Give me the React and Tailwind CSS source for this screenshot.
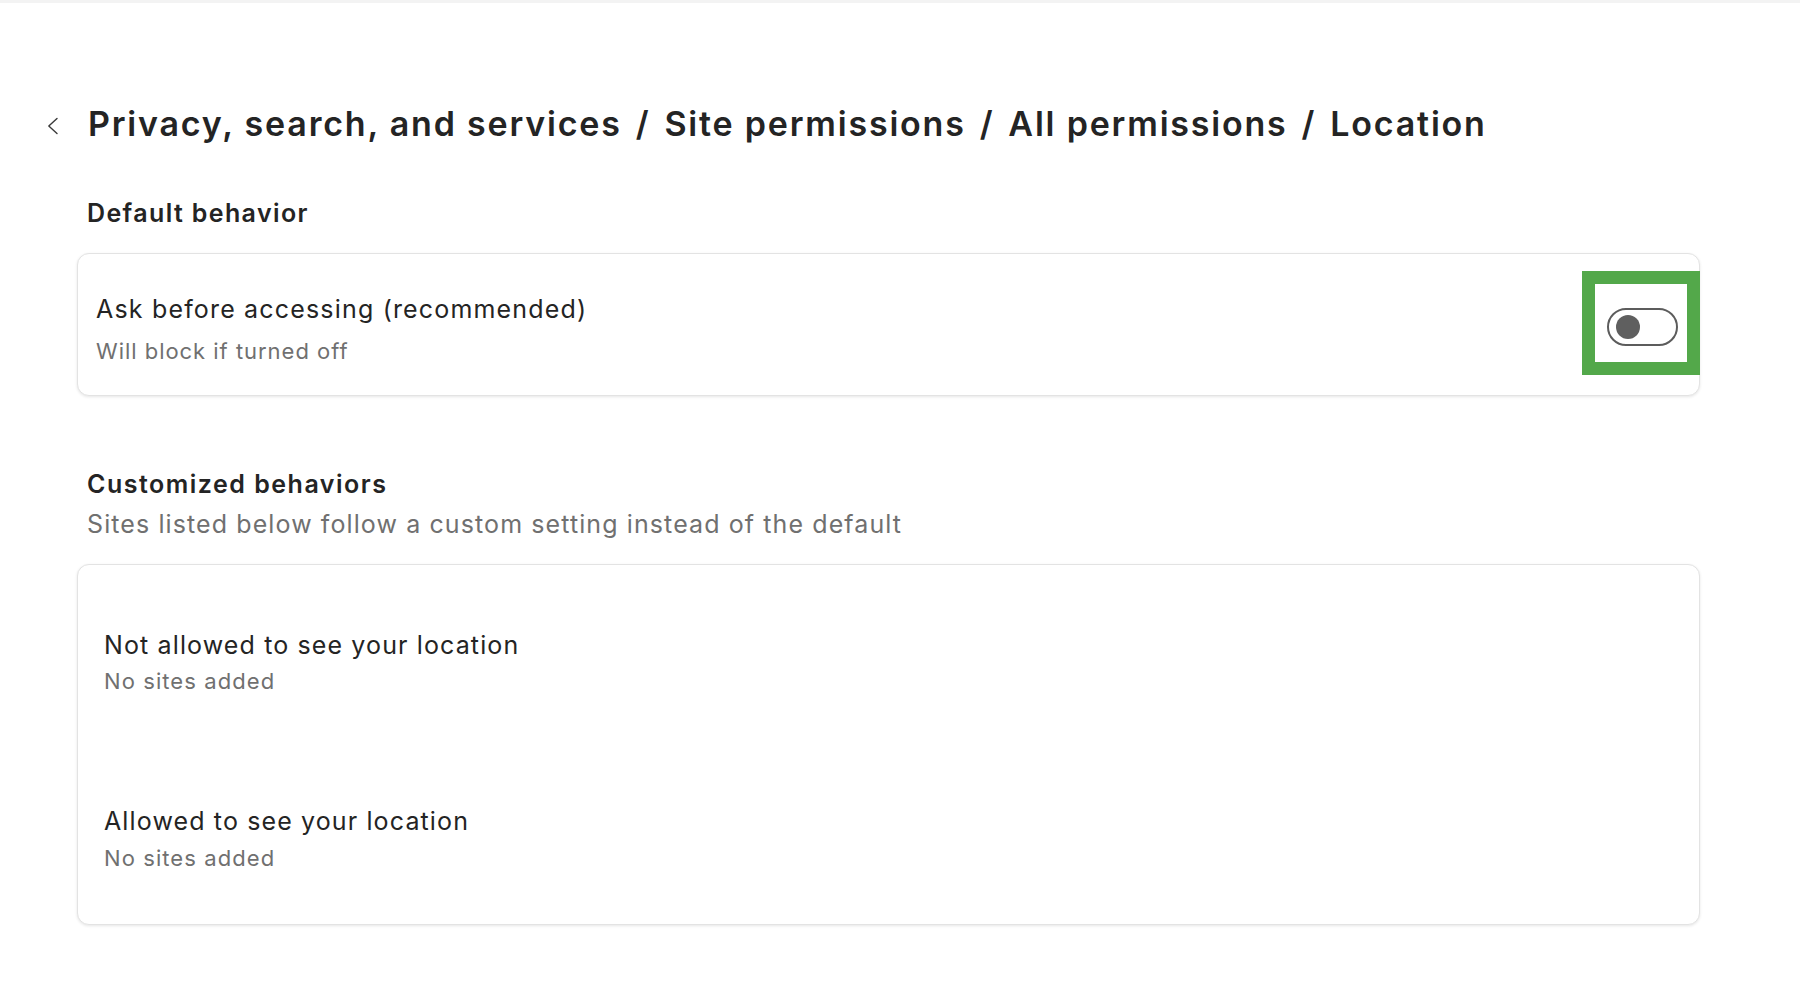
import React from "react";

export default function App() {
  return (
    <div className="min-h-[1000px] w-full bg-white border-t-[3px] border-[#f3f3f3] font-['Inter',sans-serif] text-[#242424]">
      <div className="pl-[47px] pt-[101px]">
        <div className="flex items-center h-[40px]">
          <svg width="12" height="18" viewBox="0 0 12 18" className="shrink-0 mt-[3px]">
            <path d="M10 1.5 L1.8 9 L10 16.5" fill="none" stroke="#3a3a3a" strokeWidth="1.4" strokeLinecap="round" strokeLinejoin="round" />
          </svg>
          <h1 className="ml-[29px] text-[34px] leading-[40px] font-semibold tracking-[0.053em] whitespace-nowrap">
            Privacy, search, and services
            <span className="mx-[14px]">/</span>
            Site permissions
            <span className="mx-[14px]">/</span>
            All permissions
            <span className="mx-[14px]">/</span>
            Location
          </h1>
        </div>
      </div>

      <div className="pl-[77px] w-[1700px]">
        <h2 className="mt-[54px] pl-[10px] text-[25px] leading-[30px] font-semibold tracking-[0.055em]">Default behavior</h2>

        <div className="relative mt-[25px] h-[143px] rounded-[12px] border border-[#e3e3e3] bg-white shadow-[0_1px_3px_rgba(0,0,0,0.10)] flex justify-between pl-[18px] pr-[21px]">
          <div className="flex flex-col self-start pt-[40px]">
            <div className="text-[25px] leading-[30px] tracking-[0.047em]">Ask before accessing (recommended)</div>
            <div className="mt-[14px] text-[22px] leading-[26px] tracking-[0.044em] text-[#707070]">Will block if turned off</div>
          </div>
          <div className="self-center w-[71px] h-[38px] rounded-full border-2 border-[#5c5c5c] flex items-center pl-[7px] mt-[4px]">
            <div className="w-[24px] h-[24px] rounded-full bg-[#5f5f5f]" />
          </div>
          <div className="absolute right-[-1px] top-[17px] w-[118px] h-[104px] border-[13px] border-[#53a84a]" />
        </div>

        <h2 className="mt-[73px] pl-[10px] text-[25px] leading-[30px] font-semibold tracking-[0.06em]">Customized behaviors</h2>
        <div className="mt-[10px] pl-[10px] text-[25px] leading-[30px] tracking-[0.044em] text-[#707070]">Sites listed below follow a custom setting instead of the default</div>

        <div className="mt-[25px] h-[361px] rounded-[12px] border border-[#e3e3e3] bg-white shadow-[0_1px_3px_rgba(0,0,0,0.10)] pt-[65px] pl-[26px]">
          <div className="text-[25px] leading-[30px] tracking-[0.045em]">Not allowed to see your location</div>
          <div className="mt-[8px] text-[22px] leading-[26px] tracking-[0.049em] text-[#707070]">No sites added</div>
          <div className="mt-[112px] text-[25px] leading-[30px] tracking-[0.045em]">Allowed to see your location</div>
          <div className="mt-[9px] text-[22px] leading-[26px] tracking-[0.049em] text-[#707070]">No sites added</div>
        </div>
      </div>
    </div>
  );
}
